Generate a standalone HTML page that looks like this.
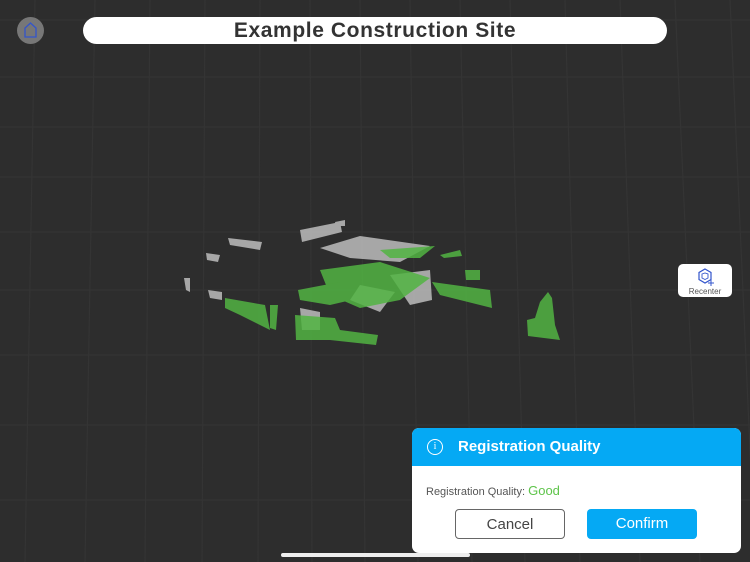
<!DOCTYPE html>
<html><head><meta charset="utf-8"><style>
*{margin:0;padding:0;box-sizing:border-box}
body{width:750px;height:562px;overflow:hidden;background:#2d2d2d;font-family:"Liberation Sans",sans-serif;position:relative}
svg.bg{position:absolute;left:0;top:0}
.home{position:absolute;left:17px;top:17px;width:27px;height:27px;border-radius:50%;background:#777}
.title{position:absolute;left:83px;top:17px;width:584px;height:27px;background:#fff;border-radius:14px;text-align:center;font-size:21px;font-weight:bold;color:#333;line-height:28px;letter-spacing:0.6px}
.rc{position:absolute;left:678px;top:264px;width:54px;height:33px;background:#fff;border-radius:5px;text-align:center;font-size:8px;color:#555}
.dlg{position:absolute;left:412px;top:428px;width:329px;height:125px;background:#fff;border-radius:7px;overflow:hidden}
.hd{height:38px;background:#05a9f4;color:#fff;font-weight:bold;font-size:15px;line-height:38px;padding-left:46px;position:relative}
.hd .i{position:absolute;left:15px;top:11px;width:16px;height:16px;border:1.5px solid #fff;border-radius:50%;font-size:10px;line-height:13px;text-align:center;font-weight:normal;font-family:"Liberation Serif",serif}
.q{position:absolute;left:14px;top:55px;font-size:11px;color:#555}
.q b{color:#5ec44a;font-weight:normal;font-size:13px}
.btn{position:absolute;top:81px;width:110px;height:30px;border-radius:4px;font-size:15px;text-align:center;line-height:30px}
.c{left:43px;border:1px solid #666;color:#444;background:#fff}
.f{left:175px;background:#05a9f4;color:#fff}
.bar{position:absolute;left:281px;top:553px;width:189px;height:4px;border-radius:2px;background:#eee}
</style></head><body>
<svg class="bg" width="750" height="562">
<g stroke="#343434" stroke-width="1.2" fill="none">
<path d="M0 20H750M0 77H750M0 127H750M0 177H750M0 232H750M0 290H750M0 355H750M0 425H750M0 500H750"/>
<path d="M35 0L25 562M95 0L85 562M150 0L145 562M205 0L202 562M260 0L258 562M310 0L312 562M360 0L365 562M410 0L418 562M460 0L472 562M510 0L525 562M565 0L580 562M620 0L640 562M675 0L700 562M730 0L755 562"/>
</g>
<g fill="#bdbdbd" opacity="0.85">
<polygon points="228,238 262,242 260,250 230,245"/>
<polygon points="300,230 340,222 342,232 302,242"/>
<polygon points="320,248 360,236 430,246 400,262 350,258"/>
<polygon points="206,253 220,255 218,262 207,260"/>
<polygon points="184,278 190,278 190,292 186,290"/>
<polygon points="208,290 222,292 222,300 210,298"/>
<polygon points="300,308 320,312 320,330 302,330"/>
<polygon points="390,275 430,270 432,300 410,305"/>
<polygon points="360,285 395,292 380,312 350,300"/>
<polygon points="335,222 345,220 345,226 336,226"/>
</g>
<g fill="#52b443" opacity="0.85">
<polygon points="320,270 380,262 430,278 400,300 360,308 330,295"/>
<polygon points="380,250 435,246 420,258 390,258"/>
<polygon points="298,290 340,282 360,298 330,305 300,300"/>
<polygon points="225,298 265,305 270,330 240,315 225,308"/>
<polygon points="295,315 335,318 340,330 378,335 376,345 330,340 296,340"/>
<polygon points="432,282 490,290 492,308 440,295"/>
<polygon points="440,255 460,250 462,256 444,258"/>
<polygon points="465,270 480,270 480,280 466,280"/>
<polygon points="527,320 535,318 540,302 548,292 552,298 555,325 560,340 528,336"/>
<polygon points="270,305 278,305 276,330 270,328"/>
</g>
</svg>
<div class="home"><svg width="27" height="27"><path d="M8 20V11L13.5 6L19 11V20Z" fill="none" stroke="#3355cc" stroke-width="1.3"/></svg></div>
<div class="title">Example Construction Site</div>
<div class="rc"><svg width="54" height="22"><path d="M27 5L33 8.5V15.5L27 19L21 15.5V8.5Z" fill="none" stroke="#3355cc" stroke-width="1.2"/><path d="M24 10L27 9L30 10V14L27 15.5L24 14Z" fill="none" stroke="#3355cc" stroke-width="0.9"/><path d="M33 16V22M30 19H36" stroke="#3355cc" stroke-width="1"/></svg><div style="margin-top:-1px">Recenter</div></div>
<div class="dlg">
<div class="hd"><span class="i">i</span>Registration Quality</div>
<div class="q">Registration Quality: <b>Good</b></div>
<div class="btn c">Cancel</div>
<div class="btn f">Confirm</div>
</div>
<div class="bar"></div>
</body></html>
